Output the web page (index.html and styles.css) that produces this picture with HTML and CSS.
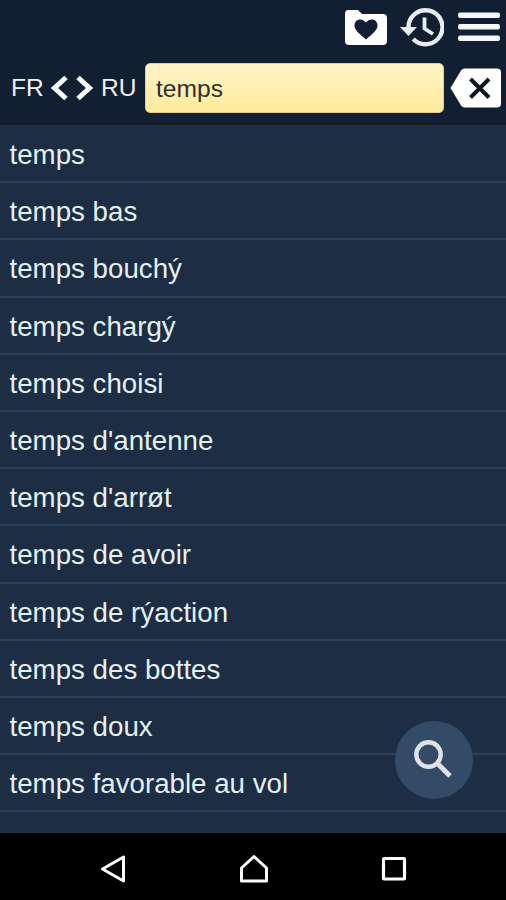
FILE: index.html
```
<!DOCTYPE html>
<html lang="fr">

<head>
    <meta charset="utf-8">
    <title>Dictionary FR - RU</title>
    <link rel="stylesheet" href="styles.css">
</head>

<body>
    <header class="header">
        <div class="toolbar">
            <svg class="icon-folder" width="44" height="36" viewBox="0 0 44 36">
                <path fill="#fff" d="M4 0h10l4 4h21q4 0 4 4v23q0 4-4 4H5q-4 0-4-4V4q0-4 3-4z" />
                <path fill="#121f32" d="M22 29.500C15 23.500 10.500 20 10.500 15.500C10.500 8.500 18.500 7.500 22 12.500C25.500 7.500 33.500 8.500 33.500 15.500C33.500 20 29 23.500 22 29.500z" />
            </svg>
            <svg class="icon-history" width="44" height="40" viewBox="0 0 44 40">
                <path fill="none" stroke="#e9edf0" stroke-width="4.400" d="M8.500 21A17 17 0 1 1 13.200 32" />
                <path fill="#e9edf0" d="M0 20h17l-8.500 9z" />
                <path fill="none" stroke="#e9edf0" stroke-width="3.800" d="M24.500 10.500v11l8.500 5.500" />
            </svg>
            <svg class="icon-menu" width="42" height="32" viewBox="0 0 42 32">
                <path stroke="#f4f6f8" stroke-width="4" stroke-linejoin="round" d="M2 3.500h38v1.500H2zM2 15h38v1.500H2zM2 26.500h38v1.500H2z" />
            </svg>
        </div>
        <div class="search">
            <span class="lang lang-from">FR</span>
            <svg class="icon-swap" width="46" height="28" viewBox="0 0 46 28">
                <path fill="none" stroke="#fff" stroke-width="5" d="M17 3.500L5.500 14L17 24.500M29 3.500L40.500 14L29 24.500" />
            </svg>
            <span class="lang lang-to">RU</span>
            <input class="search-input" type="text" value="temps">
            <svg class="icon-clear" width="52" height="40" viewBox="0 0 52 40">
                <path fill="#fff" d="M14.500 0.500H47q4 0 4 4v31q0 4-4 4H14.500q-2 0-3.500-2L0.500 20L11 2.500q1.500-2 3.500-2z" />
                <path stroke="#121722" stroke-width="4" d="M20.500 11L39 29.500M39 11L20.500 29.500" />
            </svg>
        </div>
    </header>

    <ul class="word-list">
        <li>temps</li>
        <li>temps bas</li>
        <li>temps bouchý</li>
        <li>temps chargý</li>
        <li>temps choisi</li>
        <li>temps d'antenne</li>
        <li>temps d'arrøt</li>
        <li>temps de avoir</li>
        <li>temps de rýaction</li>
        <li>temps des bottes</li>
        <li>temps doux</li>
        <li>temps favorable au vol</li>
    </ul>

    <button class="search-button" aria-label="Search">
        <svg width="40" height="40" viewBox="0 0 40 40">
            <circle cx="14.500" cy="14.500" r="12.200" fill="none" stroke="#dfe3e8" stroke-width="4.400" />
            <path stroke="#dfe3e8" stroke-width="5" d="M24 24L36 36" />
        </svg>
    </button>

    <nav class="navbar">
        <svg width="28" height="30" viewBox="0 0 28 30">
            <path fill="none" stroke="#fff" stroke-width="3" stroke-linejoin="round" d="M24.500 3v24L3.500 15z" />
        </svg>
        <svg width="30" height="30" viewBox="0 0 30 30">
            <path fill="none" stroke="#fff" stroke-width="3" stroke-linejoin="round" d="M15 2.500L27.500 14V27H2.500V14z" />
        </svg>
        <svg width="26" height="30" viewBox="0 0 26 30">
            <rect x="2.500" y="4.500" width="21" height="20.500" rx="0.500" fill="none" stroke="#fff" stroke-width="3.200" />
        </svg>
    </nav>
</body>

</html>
```
FILE: styles.css
```
* {
    box-sizing: border-box;
}

body {
    background-color: #1d2d43;
    font-family: "Liberation Sans", Arial, sans-serif;
    margin: 0;
    height: 900px;
    overflow: hidden;
    display: flex;
    flex-direction: column;
}

svg {
    display: block;
    flex: none;
}

.header {
    background-color: #121f32;
    border-bottom: 2px solid #151a25;
    height: 125px;
    flex: none;
}

.toolbar {
    display: flex;
    align-items: center;
    justify-content: flex-end;
    height: 54px;
    padding-right: 6px;
}

.icon-folder {
    margin-right: 12px;
    margin-top: 1px;
}

.icon-history {
    margin-right: 14px;
}

.search {
    display: flex;
    align-items: center;
    height: 68px;
    padding-left: 11px;
}

.lang {
    color: #f0f2f4;
    font-size: 24.500px;
    flex: none;
}

.lang-from {
    width: 38px;
}

.lang-to {
    width: 38px;
    margin-left: 6px;
}

.search-input {
    background: linear-gradient(#fff3c8, #ffeb9c);
    border: 1px solid #e3cf8c;
    border-radius: 5px;
    color: #303030;
    font-family: inherit;
    font-size: 24.600px;
    width: 299px;
    height: 50px;
    margin: 0 6px 0 6px;
    padding: 1px 10px 0;
    outline: none;
}

.word-list {
    list-style: none;
    margin: 0;
    padding: 1px 0 0;
    flex: 1;
}

.word-list li {
    border-bottom: 2px solid #2b405a;
    color: #e4f1f4;
    font-size: 27.700px;
    height: 57.200px;
    line-height: 57px;
    padding-left: 9.500px;
}

.search-button {
    position: absolute;
    left: 395px;
    top: 721px;
    width: 78px;
    height: 78px;
    display: flex;
    align-items: center;
    justify-content: center;
    background-color: #334b67;
    border: none;
    border-radius: 50%;
    padding: 0 1px 1px 0;
}

.navbar {
    display: flex;
    align-items: center;
    justify-content: space-between;
    background-color: #000;
    height: 67px;
    flex: none;
    padding: 5px 99px 0 99px;
}
```
